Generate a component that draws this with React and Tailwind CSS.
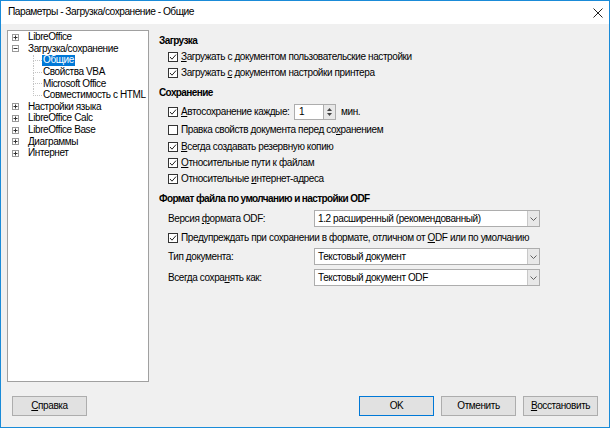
import React from 'react';

const Check = ({ checked }) => (
  <div className="w-[10px] h-[10px] border border-[#333333] bg-white flex items-center justify-center shrink-0">
    {checked && (
      <svg width="8" height="8" viewBox="0 0 8 8">
        <polyline points="1,4 3,6.2 7,1.6" fill="none" stroke="#222222" strokeWidth="1" />
      </svg>
    )}
  </div>
);

const CheckRow = ({ checked, children, className }) => (
  <div className={`flex items-center h-[16px] pl-[9px] ${className || ''}`}>
    <Check checked={checked} />
    <span className="ml-[3px] whitespace-nowrap">{children}</span>
  </div>
);

const Select = ({ value }) => (
  <div className="w-[226px] h-[17px] border border-[#adadad] bg-white flex items-center shrink-0">
    <span className="flex-1 pl-[3px] whitespace-nowrap">{value}</span>
    <div className="w-[12px] h-full bg-[#e8e8e8] border-l border-[#c8c8c8] flex items-center justify-center">
      <svg width="7" height="4" viewBox="0 0 7 4">
        <polyline points="0.5,0.5 3.5,3.5 6.5,0.5" fill="none" stroke="#606060" strokeWidth="1" />
      </svg>
    </div>
  </div>
);

const Plus = ({ open }) => (
  <div className="w-[7px] h-[7px] border border-[#9a9a9a] bg-white flex items-center justify-center shrink-0">
    <svg width="5" height="5" viewBox="0 0 5 5">
      <line x1="0.5" y1="2.5" x2="4.5" y2="2.5" stroke="#333333" strokeWidth="1" />
      {!open && <line x1="2.5" y1="0.5" x2="2.5" y2="4.5" stroke="#333333" strokeWidth="1" />}
    </svg>
  </div>
);

const TopItem = ({ label, open }) => (
  <div className="flex items-center h-[11.6px] pl-[4px]">
    <Plus open={open} />
    <span className="ml-[9px] whitespace-nowrap">{label}</span>
  </div>
);

const ChildItem = ({ label, last, selected }) => (
  <div className="flex h-[11.6px]">
    <div className="w-[25px] shrink-0" />
    <div className="w-[9px] shrink-0 flex flex-col">
      <div className="flex-1 border-l border-b border-dotted border-[#c4c4c4]" />
      <div className={last ? 'flex-1' : 'flex-1 border-l border-dotted border-[#c4c4c4]'} />
    </div>
    <span
      className={
        selected
          ? 'flex items-center px-[1px] bg-[#0078d7] text-white whitespace-nowrap'
          : 'flex items-center px-[1px] whitespace-nowrap'
      }
    >
      {label}
    </span>
  </div>
);

const Button = ({ children, primary }) => (
  <div
    className={
      primary
        ? 'w-[75px] h-[20px] bg-[#e1e1e1] border border-[#0078d7] flex items-center justify-center'
        : 'w-[75px] h-[20px] bg-[#e1e1e1] border border-[#adadad] flex items-center justify-center'
    }
  >
    {children}
  </div>
);

const Heading = ({ children, className }) => (
  <div className={`h-[16px] flex items-center font-bold tracking-[-0.6px] ${className || ''}`}>{children}</div>
);

export default function App() {
  return (
    <div className="w-[610px] h-[428px] border border-[#1a8bd8] flex flex-col bg-[#f0f0f0] text-black text-[10px] leading-none tracking-[-0.4px] font-['Liberation_Sans','Arial',sans-serif]">
      {/* title bar */}
      <div className="h-[23px] bg-white flex items-center justify-between pl-[7px] pr-[6px]">
        <span className="text-[10.2px] tracking-[-0.5px]">Параметры - Загрузка/сохранение - Общие</span>
        <svg width="10" height="10" viewBox="0 0 10 10">
          <line x1="0.5" y1="0.5" x2="9.5" y2="9.5" stroke="#222222" strokeWidth="1" />
          <line x1="9.5" y1="0.5" x2="0.5" y2="9.5" stroke="#222222" strokeWidth="1" />
        </svg>
      </div>

      <div className="flex-1 flex flex-col">
        <div className="flex pt-[6px] pl-[6px]">
          {/* tree */}
          <div className="w-[142px] h-[352px] border border-[#a0a0a0] bg-white pt-[0.5px]">
            <TopItem label="LibreOffice" />
            <TopItem label="Загрузка/сохранение" open />
            <ChildItem label="Общие" selected />
            <ChildItem label="Свойства VBA" />
            <ChildItem label="Microsoft Office" />
            <ChildItem label="Совместимость с HTML" last />
            <TopItem label="Настройки языка" />
            <TopItem label="LibreOffice Calc" />
            <TopItem label="LibreOffice Base" />
            <TopItem label="Диаграммы" />
            <TopItem label="Интернет" />
          </div>

          {/* options */}
          <div className="flex-1 flex flex-col pl-[10px]">
            <Heading className="mt-[3px]">Загрузка</Heading>
            <CheckRow checked>
              <span className="underline">З</span>агружать с документом пользовательские настройки
            </CheckRow>
            <CheckRow checked>
              Загружать <span className="underline">с</span> документом настройки принтера
            </CheckRow>

            <Heading className="mt-[4px]">Сохранение</Heading>
            <div className="flex items-center h-[16px] mt-[3px] pl-[9px]">
              <Check checked />
              <span className="ml-[3px] w-[113px] shrink-0 whitespace-nowrap">
                <span className="underline">А</span>втосохранение каждые:
              </span>
              <div className="flex h-[16px] shrink-0">
                <div className="w-[30px] h-full bg-white border border-[#adadad] flex items-center pl-[4px]">1</div>
                <div className="w-[12px] h-full bg-[#e8e8e8] border border-l-0 border-[#adadad] flex flex-col items-center justify-center gap-[2px]">
                  <svg width="5" height="3" viewBox="0 0 5 3">
                    <polygon points="0,3 2.5,0 5,3" fill="#444444" />
                  </svg>
                  <svg width="5" height="3" viewBox="0 0 5 3">
                    <polygon points="0,0 5,0 2.5,3" fill="#444444" />
                  </svg>
                </div>
              </div>
              <span className="ml-[5px]">мин.</span>
            </div>
            <CheckRow className="mt-[2px]">
              Правка свойств документа перед со<span className="underline">х</span>ранением
            </CheckRow>
            <CheckRow checked className="mt-[1px]">
              <span className="underline">В</span>сегда создавать резервную копию
            </CheckRow>
            <CheckRow checked>
              <span className="underline">О</span>тносительные пути к файлам
            </CheckRow>
            <CheckRow checked>
              Относительные <span className="underline">и</span>нтернет-адреса
            </CheckRow>

            <Heading className="mt-[4px]">Формат файла по умолчанию и настройки ODF</Heading>
            <div className="flex items-center mt-[3px] pl-[9px]">
              <span className="w-[146px] shrink-0 whitespace-nowrap">
                Версия <span className="underline">ф</span>ормата ODF:
              </span>
              <Select value="1.2 расширенный (рекомендованный)" />
            </div>
            <CheckRow checked className="mt-[3px]">
              Предупреждать при сохранении в формате, отличном от <span className="underline">O</span>DF или по умолчанию
            </CheckRow>
            <div className="flex items-center mt-[2px] pl-[9px]">
              <span className="w-[146px] shrink-0 whitespace-nowrap">
                Тип <span className="underline">д</span>окумента:
              </span>
              <Select value="Текстовый документ" />
            </div>
            <div className="flex items-center mt-[4px] pl-[9px]">
              <span className="w-[146px] shrink-0 whitespace-nowrap">
                Всегда сохра<span className="underline">н</span>ять как:
              </span>
              <Select value="Текстовый документ ODF" />
            </div>
          </div>
        </div>

        {/* buttons */}
        <div className="mt-auto flex items-center px-[11px] pb-[11px]">
          <Button>
            <span>
              <span className="underline">С</span>правка
            </span>
          </Button>
          <div className="flex-1" />
          <div className="flex gap-[7px]">
            <Button primary>OK</Button>
            <Button>Отменить</Button>
            <Button>
              <span>
                <span className="underline">В</span>осстановить
              </span>
            </Button>
          </div>
        </div>
      </div>
    </div>
  );
}
